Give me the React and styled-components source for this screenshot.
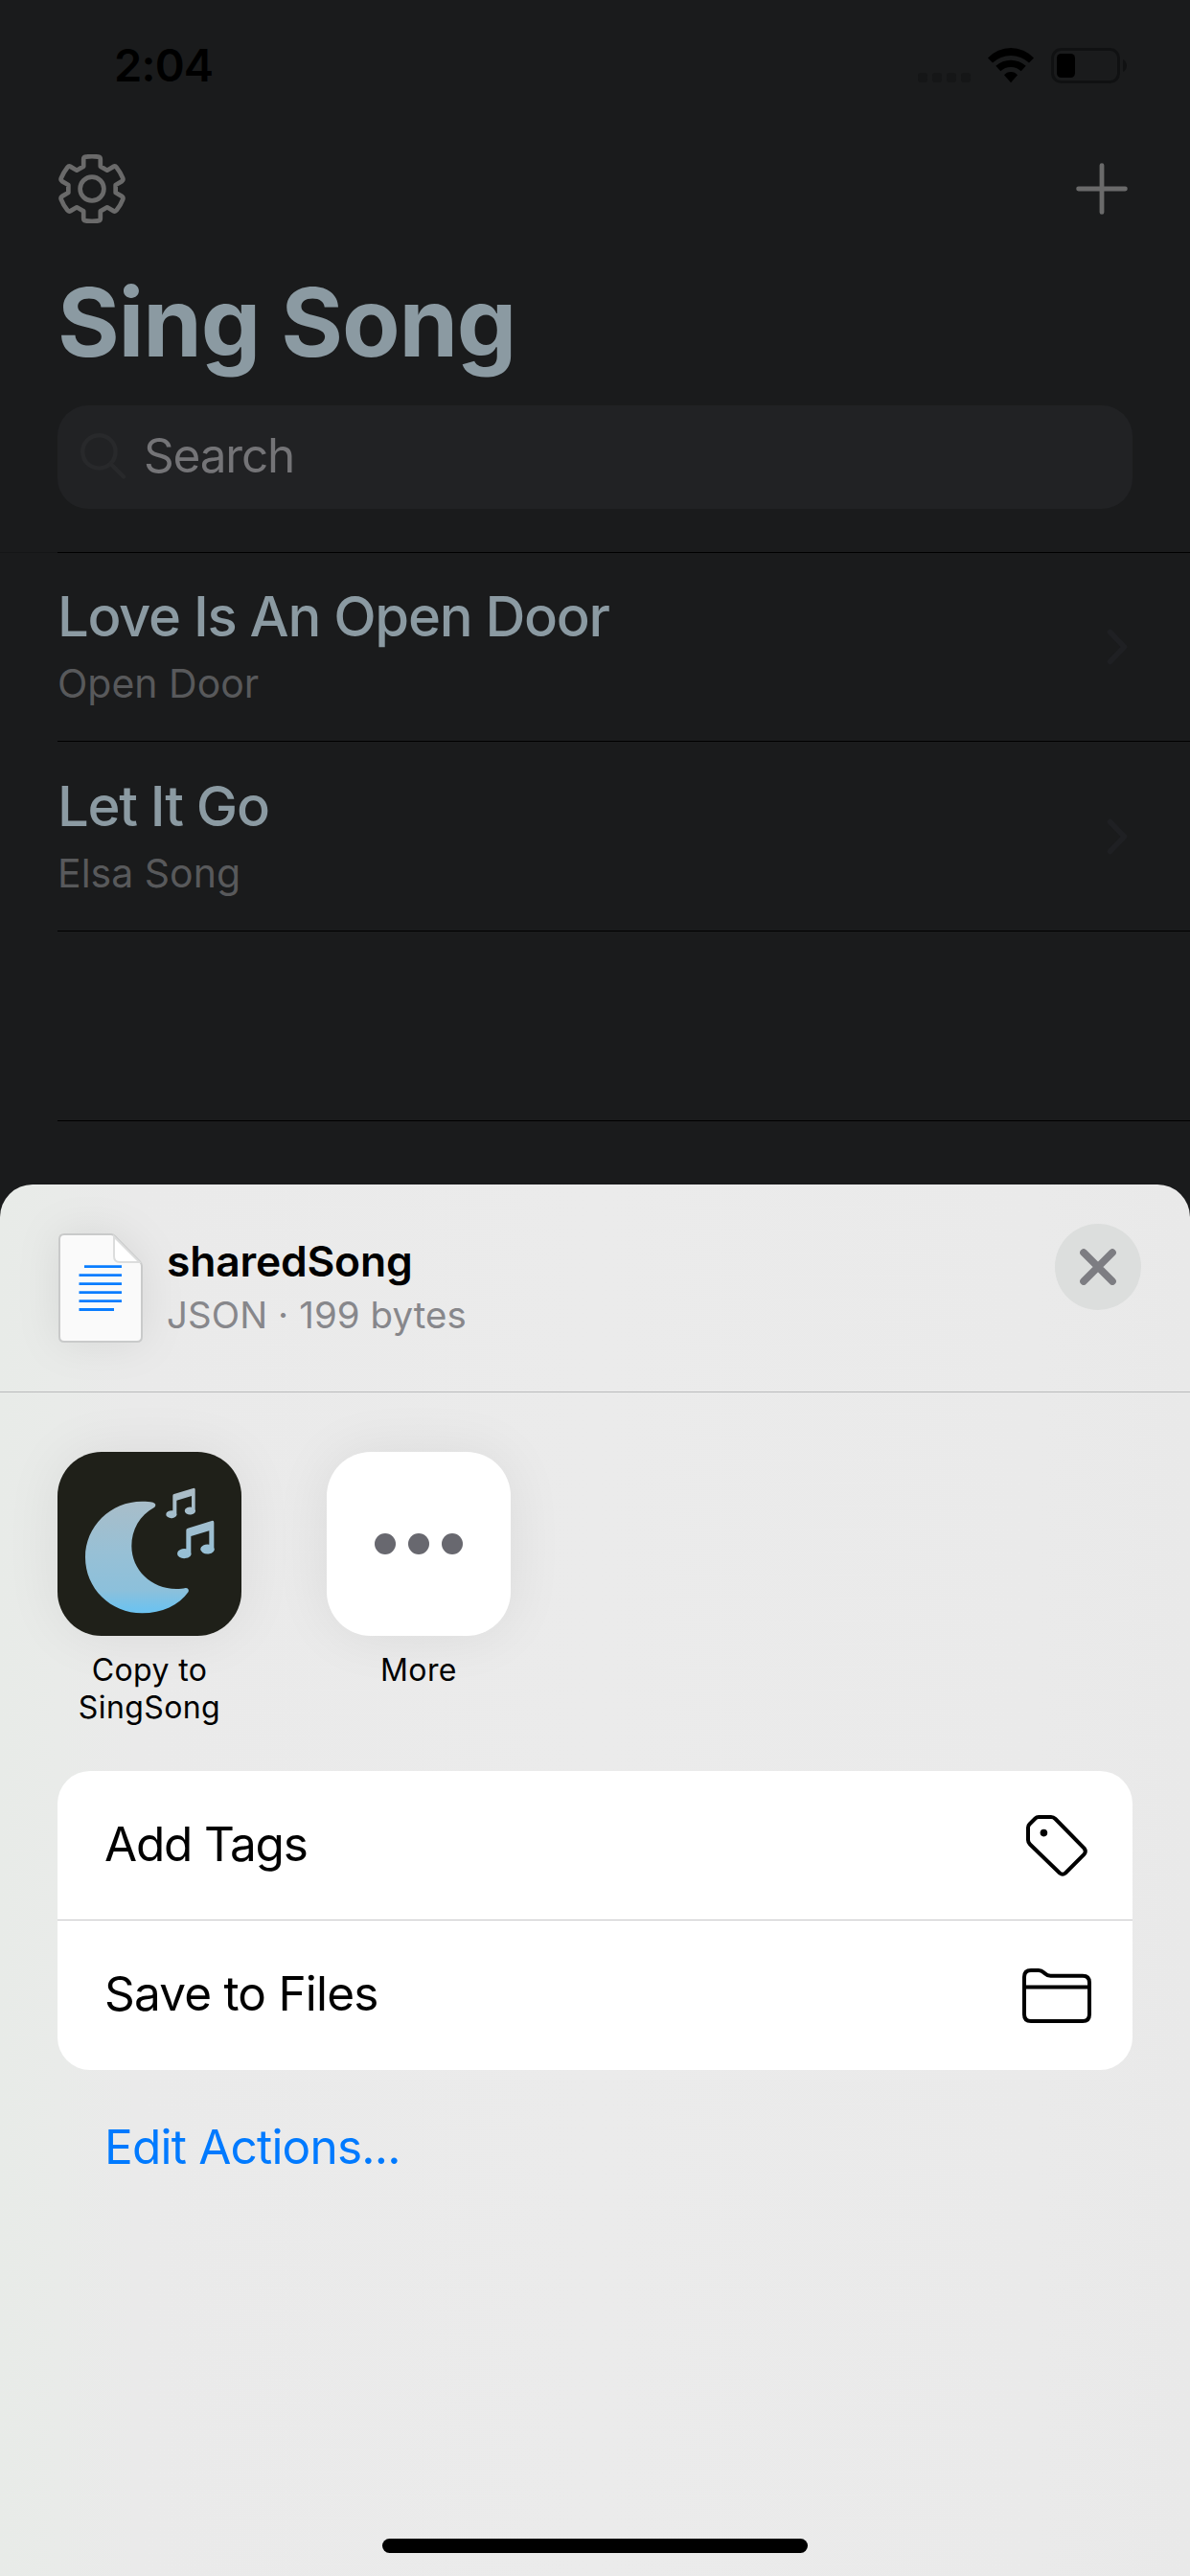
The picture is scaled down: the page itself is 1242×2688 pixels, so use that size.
import React from "react";
import styled, { createGlobalStyle } from "styled-components";

const GlobalStyle = createGlobalStyle`
  *, *::before, *::after { box-sizing: border-box; }
  body {
    margin: 0;
    background: #1a1b1c;
    font-family: Inter, "Liberation Sans", sans-serif;
    -webkit-font-smoothing: antialiased;
  }
`;

const Screen = styled.div`
  display: flex;
  flex-direction: column;
  width: 1242px;
  height: 2688px;
  overflow: hidden;
  background: #1a1b1c;
`;

const StatusBar = styled.div`
  display: flex;
  flex: none;
  align-items: center;
  justify-content: space-between;
  height: 136px;
  padding: 0 65px 0 119px;
`;

const Time = styled.span`
  font-size: 47px;
  font-weight: 600;
  line-height: 60px;
  letter-spacing: -0.8px;
  color: #000;
`;

const StatusIcons = styled.div`
  display: flex;
  align-items: flex-end;
  height: 37px;
`;

const SignalDots = styled.div`
  display: flex;
  gap: 5px;
  margin: 0 18px 1px 0;
`;

const SignalDot = styled.i`
  width: 10px;
  height: 10px;
  border-radius: 3px;
  background: #151617;
`;

const WifiIcon = styled.svg`
  width: 48px;
  height: 37px;
  margin-right: 18px;
`;

const BatteryIcon = styled.svg`
  width: 80px;
  height: 37px;
`;

const NavBar = styled.nav`
  display: flex;
  flex: none;
  align-items: center;
  justify-content: space-between;
  height: 122px;
  padding: 0 65px 0 60px;
`;

const IconButton = styled.button`
  display: flex;
  padding: 0;
  border: 0;
  background: none;
  color: #6a6a6a;
`;

const PageTitle = styled.h1`
  flex: none;
  margin: 18px 0 0 60px;
  font-size: 99px;
  font-weight: 700;
  line-height: 120px;
  letter-spacing: -1.2px;
  color: #8b9aa2;
`;

const SearchField = styled.div`
  display: flex;
  flex: none;
  align-items: center;
  gap: 18px;
  height: 108px;
  margin: 27px 60px 0;
  padding: 0 24px;
  border-radius: 32px;
  background: #212224;
`;

const SearchLabel = styled.span`
  padding-bottom: 4px;
  font-size: 49.5px;
  line-height: 60px;
  letter-spacing: -1.2px;
  color: #747477;
`;

const SongList = styled.div`
  flex: none;
  height: 661px;
  margin-top: 44px;
`;

const TopRule = styled.div`
  height: 1px;
  margin: 1px 0 -1px;
  border-left: 60px solid #151617;
  background: #000;
`;

const SongRow = styled.div`
  display: flex;
  align-items: center;
  justify-content: space-between;
  height: 198px;
  margin-left: 60px;
  padding-right: 65px;
  border-bottom: 1px solid #000;
`;

const SongText = styled.div`
  display: flex;
  flex-direction: column;
  gap: 10px;
  padding-bottom: 5px;
`;

const SongTitle = styled.span`
  font-size: 58px;
  font-weight: 500;
  line-height: 72px;
  letter-spacing: -1.3px;
  color: #8b9aa2;
`;

const SongSubtitle = styled.span`
  font-size: 41px;
  line-height: 48px;
  color: #58595b;
`;

const Sheet = styled.section`
  display: flex;
  flex: 1;
  flex-direction: column;
  border-radius: 34px 34px 0 0;
  background: linear-gradient(90deg, #e8ebe8 0, #e9ebe9 60px, #eaeaea 140px, #ebebeb 50%, #eaeaea 1080px, #e9e9e9 100%);
`;

const SheetHeader = styled.header`
  display: flex;
  flex: none;
  align-items: flex-start;
  height: 217px;
  padding: 41px 51px 0 61px;
  border-bottom: 1px solid #b9babb;
`;

const FileIcon = styled.svg`
  flex: none;
  width: 88px;
  height: 114px;
  margin-top: 10px;
  overflow: visible;
  filter: drop-shadow(0 0 22px rgba(0, 0, 0, 0.08));
`;

const FileInfo = styled.div`
  display: flex;
  flex: 1;
  flex-direction: column;
  gap: 7px;
  margin: 13px 0 0 25px;
`;

const FileName = styled.span`
  font-size: 44.4px;
  font-weight: 600;
  line-height: 52px;
  letter-spacing: -0.2px;
  color: #000;
`;

const FileMeta = styled.span`
  font-size: 38.4px;
  line-height: 46px;
  letter-spacing: 0.1px;
  color: #87878b;
`;

const CloseButton = styled.button`
  display: flex;
  align-items: center;
  justify-content: center;
  width: 90px;
  height: 90px;
  padding: 0;
  border: 0;
  border-radius: 50%;
  background: #dcdedd;
`;

const AppRow = styled.div`
  display: flex;
  flex: none;
  gap: 89px;
  height: 348px;
  padding: 62px 60px 0;
`;

const AppItem = styled.div`
  display: flex;
  flex-direction: column;
  align-items: center;
  gap: 16px;
  width: 192px;
`;

const AppTile = styled.div`
  display: flex;
  flex: none;
  align-items: center;
  justify-content: center;
  gap: 12.6px;
  width: 192px;
  height: 192px;
  border-radius: 46px;
  background: ${(p) => p.$color};
  box-shadow: 0 0 60px rgba(0, 0, 0, 0.07);
`;

const Dot = styled.i`
  width: 22.6px;
  height: 22.6px;
  border-radius: 50%;
  background: #68686f;
`;

const AppLabel = styled.span`
  font-size: 32px;
  line-height: 39px;
  letter-spacing: 0.4px;
  text-align: center;
  color: #000;
`;

const ActionCard = styled.div`
  flex: none;
  margin: 47px 60px 0;
  border-radius: 34px;
  background: #fff;
`;

const ActionRow = styled.div`
  display: flex;
  align-items: center;
  justify-content: space-between;
  height: 155px;
  padding: 0 43px 0 49px;

  & + & {
    height: 157px;
    border-top: 1px solid #c6c6c8;
  }
`;

const ActionLabel = styled.span`
  padding-bottom: 4px;
  font-size: 49.5px;
  letter-spacing: ${(p) => p.$tracking};
  color: #000;
`;

const IconSlot = styled.span`
  display: flex;
  justify-content: center;
  width: 72px;
`;

const EditLink = styled.a`
  flex: none;
  margin: 50px 0 0 109px;
  font-size: 49.5px;
  line-height: 60px;
  letter-spacing: -0.8px;
  color: #007aff;
`;

const HomeIndicator = styled.div`
  flex: none;
  width: 444px;
  height: 15px;
  margin: auto auto 24px;
  border-radius: 8px;
  background: #000;
`;

// One tooth of the gear, relative to the gear's centre.
const TOOTH = [
  ["", -8.8, -23.4],
  ["L", -8.8, -31],
  ["Q", -8.8, -33],
  ["", -6.5, -33.4],
  ["Q", 0, -34.4],
  ["", 6.5, -33.4],
  ["Q", 8.8, -33],
  ["", 8.8, -31],
  ["L", 8.8, -23.4],
];

const gearPath = [0, 1, 2, 3, 4, 5]
  .map((turn) => {
    const a = (turn * Math.PI) / 3;
    return TOOTH.map(([cmd, x, y], i) => {
      const px = (36 + x * Math.cos(a) - y * Math.sin(a)).toFixed(2);
      const py = (36 + x * Math.sin(a) + y * Math.cos(a)).toFixed(2);
      const c = i === 0 ? (turn === 0 ? "M" : "L") : cmd;
      return `${c}${px} ${py}`;
    }).join(" ");
  })
  .join(" ");

const GearIcon = () => (
  <svg width="72" height="72" viewBox="0 0 72 72" fill="none" stroke="currentColor" strokeWidth="4.7" strokeLinejoin="round">
    <path d={`${gearPath}Z`} />
    <circle cx="36" cy="36" r="12.4" />
  </svg>
);

const PlusIcon = () => (
  <svg width="54" height="54" viewBox="0 0 54 54" stroke="currentColor" strokeWidth="4.8" strokeLinecap="round">
    <path d="M27 2.6V51.4M2.6 27H51.4" />
  </svg>
);

const SearchIcon = () => (
  <svg width="48" height="50" viewBox="0 0 48 50" fill="none" stroke="#28292b" strokeWidth="4.4" strokeLinecap="round">
    <circle cx="19.4" cy="19.4" r="17.2" />
    <path d="M32.5 33L45 45.5" />
  </svg>
);

const Chevron = () => (
  <svg width="22" height="38" viewBox="0 0 22 38" fill="none" stroke="#1f2023" strokeWidth="5.6" strokeLinecap="round" strokeLinejoin="round">
    <path d="M3.5 3.5L18.5 19L3.5 34.5" />
  </svg>
);

const CloseIcon = () => (
  <svg width="38" height="38" viewBox="0 0 38 38" stroke="#7d7d82" strokeWidth="7.6" strokeLinecap="round">
    <path d="M4 4L34 34M34 4L4 34" />
  </svg>
);

const TagIcon = () => (
  <svg width="64" height="64" viewBox="0 0 64 64" fill="none" stroke="#000" strokeWidth="4">
    <path d="M13 2H26Q28.5 2 30.5 4L60.5 34.5Q63 38 60.5 41L41 60.5Q38 63 35 60.5L4 30.5Q2 28.5 2 26V13Q2 11 3.5 9.5L9.5 3.5Q11 2 13 2Z" />
    <circle cx="18.4" cy="18.6" r="3.8" fill="#000" stroke="none" />
  </svg>
);

const FolderIcon = () => (
  <svg width="72" height="57" viewBox="0 0 72 57" fill="none" stroke="#000" strokeWidth="4">
    <path d="M9 2H17Q20 2 22.3 4.2L23.5 5.3Q26 7.7 29.5 7.7H63Q70 7.7 70 14.7V48Q70 55 63 55H9Q2 55 2 48V9Q2 2 9 2ZM2 19.4H70" />
  </svg>
);

const MoonArt = () => (
  <svg width="192" height="192" viewBox="0 0 576 576">
    <defs>
      <linearGradient id="sky" gradientUnits="userSpaceOnUse" x1="0" y1="110" x2="0" y2="505">
        <stop offset="0" stopColor="#adbcc5" />
        <stop offset="0.5" stopColor="#98c0d5" />
        <stop offset="0.82" stopColor="#8cc0db" />
        <stop offset="0.96" stopColor="#70c2ed" />
        <stop offset="1" stopColor="#6cc2f0" />
      </linearGradient>
    </defs>
    <g fill="url(#sky)">
      <path d="M265 155C279 155 289 156 299 158Q312 163 304 173C257 199 232 243 232 295C232 369 293 429 372 429C384 429 393 428 401 426Q413 427 410 438C380 480 327 505 265 505C166 505 87 427 87 330C87 233 166 155 265 155Z" />
      <path d="M361 137Q361 133 365 132L425 114Q431 112 431 118V180A17 12 0 1 1 420 173V138L373 152V192A17 12 0 1 1 361 184Z" />
      <path d="M403 245Q403 240 408 239L483 216Q490 214 490 221V299A22 15 0 1 1 475 290V247L418 264V314A22 15 0 1 1 403 304Z" />
    </g>
  </svg>
);

const SONGS = [
  { title: "Love Is An Open Door", subtitle: "Open Door" },
  { title: "Let It Go", subtitle: "Elsa Song" },
];

const ACTIONS = [
  { label: "Add Tags", tracking: "-1.2px", Icon: TagIcon },
  { label: "Save to Files", tracking: "-0.8px", Icon: FolderIcon },
];

export default function App() {
  return (
    <Screen>
      <GlobalStyle />
      <StatusBar>
        <Time>2:04</Time>
        <StatusIcons>
          <SignalDots>
            <SignalDot />
            <SignalDot />
            <SignalDot />
            <SignalDot />
          </SignalDots>
          <WifiIcon viewBox="0 0 48 37">
            <path d="M0 10.5A32.7 32.7 0 0 1 48 10.5L43 15.5A27.8 27.8 0 0 0 5 15.5Z" />
            <path d="M8.3 18.7A23.5 23.5 0 0 1 39.7 18.7L34.7 24.3A15.4 15.4 0 0 0 13.3 24.3Z" />
            <path d="M17 28.3A9 9 0 0 1 31 28.3L24 36.3Z" />
          </WifiIcon>
          <BatteryIcon viewBox="0 0 80 37">
            <rect x="1.5" y="1.5" width="69" height="34" rx="9" fill="none" stroke="#101112" strokeWidth="3" />
            <rect x="6" y="6" width="19" height="25" rx="4.5" />
            <path d="M75 12Q79 14.5 79 18.5T75 25Z" fill="#101112" />
          </BatteryIcon>
        </StatusIcons>
      </StatusBar>

      <NavBar>
        <IconButton aria-label="Settings">
          <GearIcon />
        </IconButton>
        <IconButton aria-label="Add song">
          <PlusIcon />
        </IconButton>
      </NavBar>

      <PageTitle>Sing Song</PageTitle>

      <SearchField>
        <SearchIcon />
        <SearchLabel>Search</SearchLabel>
      </SearchField>

      <SongList>
        <TopRule />
        {SONGS.map((song) => (
          <SongRow key={song.title}>
            <SongText>
              <SongTitle>{song.title}</SongTitle>
              <SongSubtitle>{song.subtitle}</SongSubtitle>
            </SongText>
            <Chevron />
          </SongRow>
        ))}
        <SongRow />
      </SongList>

      <Sheet>
        <SheetHeader>
          <FileIcon viewBox="0 0 88 114">
            <path d="M6 1H55Q57 1 59 3L85 29.5Q87 31.5 87 34V108Q87 113 82 113H6Q1 113 1 108V6Q1 1 6 1Z" fill="#fafafa" stroke="#c9caca" strokeWidth="2" />
            <path d="M58 3.5V24Q58 30 64 30H84.5Z" fill="#fff" stroke="#dcdddd" strokeWidth="2" />
            <path d="M27 34.7H66M21.5 43.7H66M21.5 52.7H66M21.5 61.6H66M21.5 70.6H66M21.5 79.5H58" stroke="#0a7dff" strokeWidth="2.8" />
          </FileIcon>
          <FileInfo>
            <FileName>sharedSong</FileName>
            <FileMeta>JSON · 199 bytes</FileMeta>
          </FileInfo>
          <CloseButton aria-label="Close">
            <CloseIcon />
          </CloseButton>
        </SheetHeader>

        <AppRow>
          <AppItem>
            <AppTile $color="#1f2019">
              <MoonArt />
            </AppTile>
            <AppLabel>
              Copy to
              <br />
              SingSong
            </AppLabel>
          </AppItem>
          <AppItem>
            <AppTile $color="#fff">
              <Dot />
              <Dot />
              <Dot />
            </AppTile>
            <AppLabel>More</AppLabel>
          </AppItem>
        </AppRow>

        <ActionCard>
          {ACTIONS.map(({ label, tracking, Icon }) => (
            <ActionRow key={label}>
              <ActionLabel $tracking={tracking}>{label}</ActionLabel>
              <IconSlot>
                <Icon />
              </IconSlot>
            </ActionRow>
          ))}
        </ActionCard>

        <EditLink>Edit Actions...</EditLink>

        <HomeIndicator />
      </Sheet>
    </Screen>
  );
}
